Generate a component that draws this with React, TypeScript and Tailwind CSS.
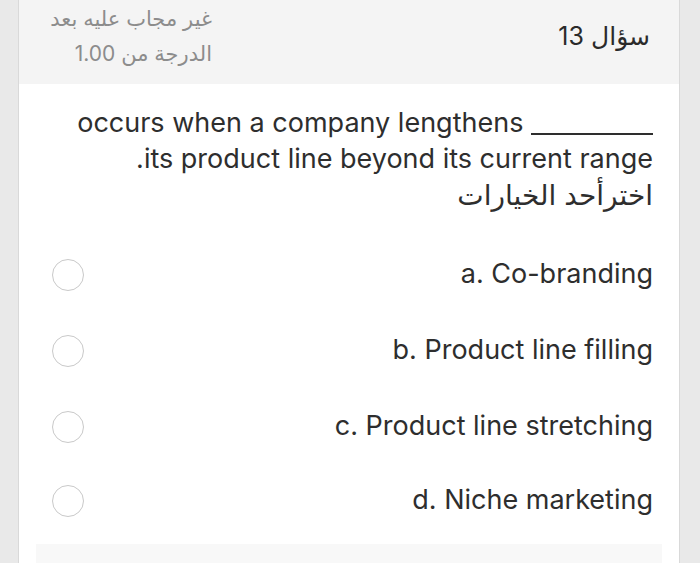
import React from "react";

const font = { fontFamily: 'Inter, "DejaVu Sans", sans-serif' };

function Radio() {
  return <div className="w-[32px] h-[32px] rounded-full border-[1.5px] border-[#c9c9c9] bg-white shrink-0" />;
}

const options = [
  { label: "a. Co-branding", h: "h-[75px]" },
  { label: "b. Product line filling", h: "h-[77px]" },
  { label: "c. Product line stretching", h: "h-[75px]" },
  { label: "d. Niche marketing", h: "h-[73px]" },
];

export default function App() {
  return (
    <div className="w-[700px] h-[563px] overflow-hidden bg-[#ebebeb] flex" style={font}>
      <div className="w-[19px] shrink-0 bg-[#e9e9e9] border-r border-[#d9d9d9]" />
      <div dir="rtl" className="w-[660px] shrink-0 bg-white flex flex-col">
        <div className="h-[84px] bg-[#f4f4f4] flex justify-between items-start pr-[29px] pl-[15px] shrink-0">
          <div className="mt-[19px] text-[25px] leading-[35px] text-[#2a2a2a]">سؤال 13</div>
          <div className="w-[178px] mt-[1px] text-[21px] leading-[35px] text-[#8c8c8c]">
            <div>غير مجاب عليه بعد</div>
            <div>الدرجة من 1.00</div>
          </div>
        </div>
        <div className="pt-[21px] pr-[26px] pl-[33px] flex flex-col">
          <div className="text-[27px] leading-[36px] text-[#2e2e2e]">
            <div dir="ltr" className="text-right">
              occurs when a company lengthens{" "}
              <span className="inline-block w-[122px] h-[22px] border-b-2 border-[#2e2e2e] align-[-3px]" />
            </div>
            <div dir="ltr" className="text-right">.its product line beyond its current range</div>
            <div className="text-right text-[28px]">اخترأحد الخيارات</div>
          </div>
          <div className="mt-[24px] flex flex-col">
            {options.map((o) => (
              <div key={o.label} className={`${o.h} flex items-center justify-between`}>
                <div dir="ltr" className="text-[27px] text-[#2e2e2e]">{o.label}</div>
                <Radio />
              </div>
            ))}
          </div>
        </div>
        <div className="mt-[7px] mx-[17px] flex-1 bg-[#f8f8f8]" />
      </div>
      <div className="flex-1 bg-[#e9e9e9] border-l border-[#d9d9d9]" />
    </div>
  );
}
